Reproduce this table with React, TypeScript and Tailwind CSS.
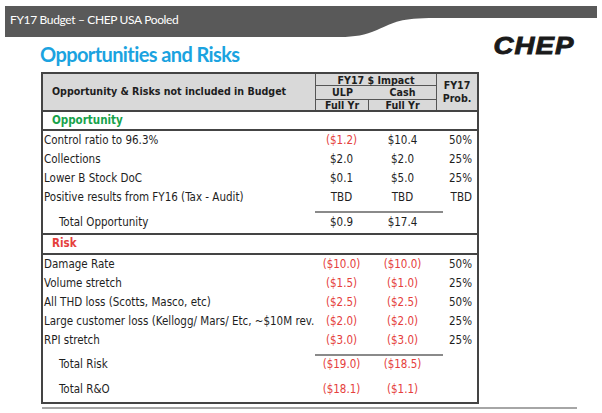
import React from 'react';

type Row = {
  label: string;
  ulp: string;
  cash: string;
  prob?: string;
  red?: boolean;
  ulpRed?: boolean;
};

const opportunities: Row[] = [
  { label: 'Control ratio to 96.3%', ulp: '($1.2)', cash: '$10.4', prob: '50%', ulpRed: true },
  { label: 'Collections', ulp: '$2.0', cash: '$2.0', prob: '25%' },
  { label: 'Lower B Stock DoC', ulp: '$0.1', cash: '$5.0', prob: '25%' },
  { label: 'Positive results from FY16 (Tax - Audit)', ulp: 'TBD', cash: 'TBD', prob: 'TBD' },
];

const risks: Row[] = [
  { label: 'Damage Rate', ulp: '($10.0)', cash: '($10.0)', prob: '50%', red: true },
  { label: 'Volume stretch', ulp: '($1.5)', cash: '($1.0)', prob: '25%', red: true },
  { label: 'All THD loss (Scotts, Masco, etc)', ulp: '($2.5)', cash: '($2.5)', prob: '50%', red: true },
  { label: 'Large customer loss (Kellogg/ Mars/ Etc, ~$10M rev.', ulp: '($2.0)', cash: '($2.0)', prob: '25%', red: true },
  { label: 'RPI stretch', ulp: '($3.0)', cash: '($3.0)', prob: '25%', red: true },
];

function DataRow({ row }: { row: Row }) {
  return (
    <div className="flex h-[19px] items-center">
      <div className="w-[272px] pl-[1px] whitespace-nowrap">{row.label}</div>
      <div className={`w-[53px] text-center ${row.red || row.ulpRed ? 'text-[#e5403c]' : ''}`}>{row.ulp}</div>
      <div className={`w-[69px] text-center ${row.red ? 'text-[#e5403c]' : ''}`}>{row.cash}</div>
      <div className="w-[40px] text-right pr-[5px]">{row.prob}</div>
    </div>
  );
}

function TotalRow({ label, ulp, cash, red, h }: { label: string; ulp: string; cash: string; red?: boolean; h: string }) {
  return (
    <div className={`flex items-center ${h}`}>
      <div className="w-[272px] pl-[16px]">{label}</div>
      <div className={`w-[53px] text-center ${red ? 'text-[#e5403c]' : ''}`}>{ulp}</div>
      <div className={`w-[69px] text-center ${red ? 'text-[#e5403c]' : ''}`}>{cash}</div>
      <div className="w-[40px]" />
    </div>
  );
}

function TotalLine() {
  return (
    <div className="flex">
      <div className="w-[272px]" />
      <div className="w-[128px] h-[2px] bg-[#8a8a8a]" />
    </div>
  );
}

export default function App() {
  return (
    <div className="w-[602px] h-[413px] bg-white overflow-hidden relative" style={{ fontFamily: '"DejaVu Sans Condensed", "DejaVu Sans", sans-serif' }}>
      {/* Title bar */}
      <div className="relative h-[37px] mt-[6px] ml-[5px] w-[592px]">
        <svg className="absolute inset-0" width="592" height="31" viewBox="0 0 592 31">
          <path d="M0 0 H592 V12 H430 C395 12 390 16 372 24 C360 29 350 31 335 31 H0 Z" fill="#595959" />
        </svg>
        <div className="relative pl-[5px] pt-[8px] text-white text-[12px] tracking-[-0.35px] leading-none" style={{ fontFamily: 'Lato, "Open Sans", sans-serif' }}>
          FY17 Budget – CHEP USA Pooled
        </div>
      </div>

      {/* Heading + logo */}
      <div className="flex items-start justify-between pl-[40px] pr-[27px] -mt-[3px] h-[32px]">
        <h1 className="text-[20px] font-bold leading-none tracking-[-0.6px] text-[#1ba3e0] pt-[4px]" style={{ fontFamily: 'Lato, "Open Sans", sans-serif' }}>
          Opportunities and Risks
        </h1>
        <div className="text-[24px] font-bold italic leading-none tracking-[1px] text-[#1a1a1a] -mt-[6px] scale-x-[1.15] origin-right [-webkit-text-stroke:0.9px_#1a1a1a]" style={{ fontFamily: '"Liberation Sans", Arial, sans-serif' }}>
          CHEP
        </div>
      </div>

      {/* Table */}
      <div className="ml-[41px] w-[438px] border-2 border-[#444] text-[11.5px] text-[#1e1e1e]">
        {/* Header */}
        <div className="flex bg-[#d9d9d9] font-bold text-[10.6px] h-[38px] border-b-2 border-[#444]">
          <div className="w-[272px] flex items-center pl-[9px] whitespace-nowrap">Opportunity &amp; Risks not included in Budget</div>
          <div className="w-[122px] flex flex-col border-l border-r border-[#555]">
            <div className="h-[12px] leading-[12px] text-center border-b border-[#555]">FY17 $ Impact</div>
            <div className="h-[14px] leading-[13px] flex border-b border-[#555]">
              <div className="w-[53px] text-center">ULP</div>
              <div className="flex-1 text-center">Cash</div>
            </div>
            <div className="flex-1 flex leading-[10px]">
              <div className="w-[53px] border-r border-[#555] flex items-center justify-center">Full Yr</div>
              <div className="flex-1 flex items-center justify-center">Full Yr</div>
            </div>
          </div>
          <div className="flex-1 flex flex-col items-center justify-center leading-[13px]">
            <div>FY17</div>
            <div>Prob.</div>
          </div>
        </div>

        {/* Opportunity */}
        <div className="h-[19px] flex items-center pl-[9px] font-bold text-[#17a24a] border-b-2 border-[#444]">Opportunity</div>
        {opportunities.map((r) => (
          <DataRow key={r.label} row={r} />
        ))}
        <div className="h-[4px]" />
        <TotalLine />
        <TotalRow label="Total Opportunity" ulp="$0.9" cash="$17.4" h="h-[20px]" />

        {/* Risk */}
        <div className="h-[22px] flex items-center pl-[9px] font-bold text-[#e5403c] border-y-2 border-[#444]">Risk</div>
        {risks.map((r) => (
          <DataRow key={r.label} row={r} />
        ))}
        <div className="h-[4px]" />
        <TotalLine />
        <TotalRow label="Total Risk" ulp="($19.0)" cash="($18.5)" red h="h-[18px]" />
        <TotalRow label="Total R&O" ulp="($18.1)" cash="($1.1)" red h="h-[28px] pt-[4px]" />
      </div>

      <div className="ml-[42px] mt-[3px] w-[535px] h-[2px] bg-[#a6a6a6]" />
    </div>
  );
}
